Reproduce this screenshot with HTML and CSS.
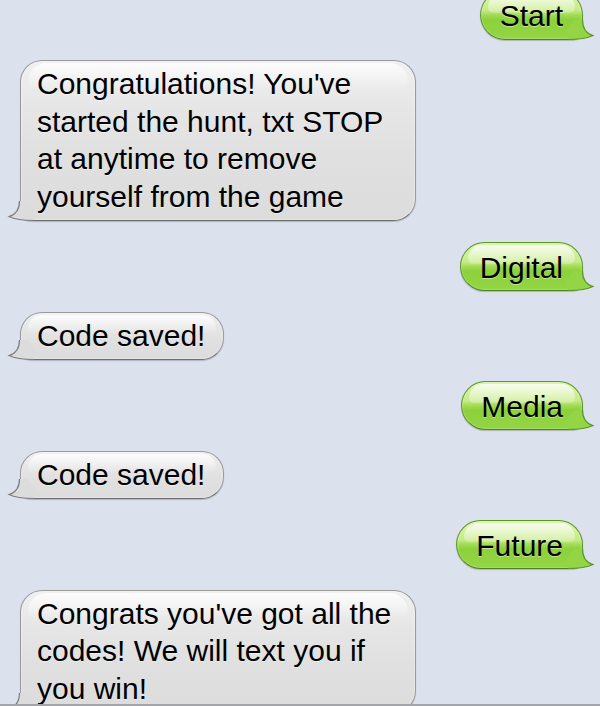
FILE: index.html
```html
<!DOCTYPE html>
<html>
<head>
<meta charset="utf-8">
<link rel="stylesheet" href="styles.css">
</head>
<body>
<div class="thread">
  <div class="msg sent"><span class="txt">Start</span><svg class="tail" width="28" height="22" viewBox="0 0 28 22"><path class="tf" d="M16.5 2 C16.5 10 20 15.5 27 17.5 C21 20.5 12 21.5 2 21.5 L0 12 L8 2 Z"/><path class="ts" d="M16.5 2 C16.5 10 20 15.5 27 17.5 C21 20.5 12 21.5 2 21.5"/></svg></div>
  <div class="msg recv"><span class="txt">Congratulations! You've started the hunt, txt STOP at anytime to remove yourself from the game</span><svg class="tail" width="28" height="22" viewBox="0 0 28 22"><path class="tf" d="M16.5 2 C16.5 10 20 15.5 27 17.5 C21 20.5 12 21.5 2 21.5 L0 12 L8 2 Z"/><path class="ts" d="M16.5 2 C16.5 10 20 15.5 27 17.5 C21 20.5 12 21.5 2 21.5"/></svg></div>
  <div class="msg sent"><span class="txt">Digital</span><svg class="tail" width="28" height="22" viewBox="0 0 28 22"><path class="tf" d="M16.5 2 C16.5 10 20 15.5 27 17.5 C21 20.5 12 21.5 2 21.5 L0 12 L8 2 Z"/><path class="ts" d="M16.5 2 C16.5 10 20 15.5 27 17.5 C21 20.5 12 21.5 2 21.5"/></svg></div>
  <div class="msg recv"><span class="txt">Code saved!</span><svg class="tail" width="28" height="22" viewBox="0 0 28 22"><path class="tf" d="M16.5 2 C16.5 10 20 15.5 27 17.5 C21 20.5 12 21.5 2 21.5 L0 12 L8 2 Z"/><path class="ts" d="M16.5 2 C16.5 10 20 15.5 27 17.5 C21 20.5 12 21.5 2 21.5"/></svg></div>
  <div class="msg sent"><span class="txt">Media</span><svg class="tail" width="28" height="22" viewBox="0 0 28 22"><path class="tf" d="M16.5 2 C16.5 10 20 15.5 27 17.5 C21 20.5 12 21.5 2 21.5 L0 12 L8 2 Z"/><path class="ts" d="M16.5 2 C16.5 10 20 15.5 27 17.5 C21 20.5 12 21.5 2 21.5"/></svg></div>
  <div class="msg recv"><span class="txt">Code saved!</span><svg class="tail" width="28" height="22" viewBox="0 0 28 22"><path class="tf" d="M16.5 2 C16.5 10 20 15.5 27 17.5 C21 20.5 12 21.5 2 21.5 L0 12 L8 2 Z"/><path class="ts" d="M16.5 2 C16.5 10 20 15.5 27 17.5 C21 20.5 12 21.5 2 21.5"/></svg></div>
  <div class="msg sent"><span class="txt">Future</span><svg class="tail" width="28" height="22" viewBox="0 0 28 22"><path class="tf" d="M16.5 2 C16.5 10 20 15.5 27 17.5 C21 20.5 12 21.5 2 21.5 L0 12 L8 2 Z"/><path class="ts" d="M16.5 2 C16.5 10 20 15.5 27 17.5 C21 20.5 12 21.5 2 21.5"/></svg></div>
  <div class="msg recv"><span class="txt">Congrats you've got all the codes! We will text you if you win!</span><svg class="tail" width="28" height="22" viewBox="0 0 28 22"><path class="tf" d="M16.5 2 C16.5 10 20 15.5 27 17.5 C21 20.5 12 21.5 2 21.5 L0 12 L8 2 Z"/><path class="ts" d="M16.5 2 C16.5 10 20 15.5 27 17.5 C21 20.5 12 21.5 2 21.5"/></svg></div>
</div>
<div class="inputbar"></div>
</body>
</html>
```
FILE: styles.css
```css
html, body {
  margin: 0;
  padding: 0;
  height: 706px;
  overflow: hidden;
}
body {
  background: #dbe2ed;
  font-family: "Liberation Sans", Helvetica, Arial, sans-serif;
  font-size: 30px;
  color: #000;
}
.thread {
  display: flex;
  flex-direction: column;
  gap: 20.5px;
  padding: 0 17px 0 20px;
  margin-top: -10px;
}
.msg {
  position: relative;
  box-sizing: border-box;
  line-height: 37.5px;
  border: 1px solid;
}
.msg::before {
  content: "";
  position: absolute;
  left: 7px;
  right: 7px;
  top: 2px;
  height: 42%;
  max-height: 26px;
  border-radius: 20px 20px 8px 8px;
  pointer-events: none;
}
.txt {
  position: relative;
  z-index: 1;
  text-shadow: 0 1px 0 rgba(255,255,255,0.45);
}
.tail {
  position: absolute;
  bottom: -1px;
  z-index: 0;
  overflow: visible;
}
.ts {
  fill: none;
  stroke-width: 1.2;
}

.sent {
  align-self: flex-end;
  padding: 6px 19px 4px 19px;
  border-radius: 25px 25px 10px 25px;
  border-color: #5b962c;
  border-bottom-color: #4d8422;
  background: linear-gradient(to bottom, #daf4aa 0%, #c6eb88 40%, #a2db55 50%, #8cd13a 60%, #94d545 100%);
  box-shadow: inset 0 0 2px rgba(255,255,255,0.6), 0 1px 1px rgba(40,60,20,0.25);
}
.sent::before {
  background: linear-gradient(to bottom, rgba(255,255,255,0.8), rgba(255,255,255,0.2));
}
.sent .tail {
  right: -12px;
}
.sent .tf { fill: #94d545; }
.sent .ts { stroke: #5b962c; }

.recv {
  align-self: flex-start;
  max-width: 396px;
  padding: 4px 18px 5px 16px;
  border-radius: 22px 22px 22px 10px;
  border-color: #9a9a9a;
  border-bottom-color: #6f6f6f;
  background: linear-gradient(to bottom, #f0f0f0 0%, #e6e6e6 30%, #e0e0e0 60%, #dcdcdc 100%);
  box-shadow: inset 0 0 2px rgba(255,255,255,0.9), 0 1px 1px rgba(0,0,0,0.2);
}
.recv::before {
  background: linear-gradient(to bottom, rgba(255,255,255,0.8), rgba(255,255,255,0));
}
.recv .tail {
  left: -13px;
  transform: scaleX(-1);
}
.recv .tf { fill: #dcdcdc; }
.recv .ts { stroke: #7d7d7d; }

.inputbar {
  position: fixed;
  left: 0;
  right: 0;
  bottom: 0;
  height: 2px;
  background: #a3a5aa;
  z-index: 5;
}
```
